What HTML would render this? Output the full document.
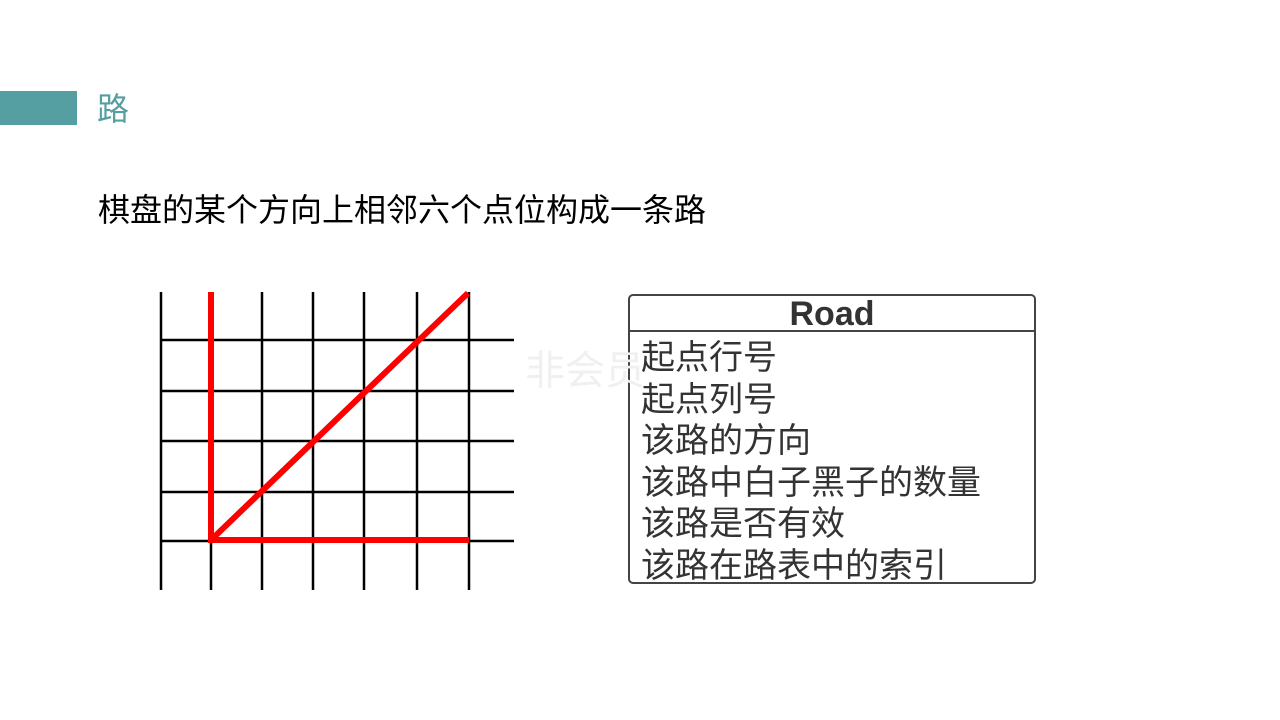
<!DOCTYPE html>
<html><head><meta charset="utf-8"><style>
body{margin:0;width:1280px;height:720px;background:#fff;position:relative;overflow:hidden;font-family:"Liberation Sans","Noto Sans CJK SC",sans-serif}
.a{position:absolute;white-space:nowrap}
</style></head><body>
<div class="a" style="left:0;top:91px;width:77px;height:34px;background:#559ea2"></div>
<div class="a" style="left:97px;top:89px;font-size:32px;line-height:40px;color:#559ea2">路</div>
<div class="a" style="left:98px;top:190px;font-size:32px;line-height:40px;color:#000">棋盘的某个方向上相邻六个点位构成一条路</div>
<svg class="a" style="left:0;top:0" width="1280" height="720">
<g stroke="#000" stroke-width="2.5">
<line x1="161" y1="292" x2="161" y2="590"/><line x1="211" y1="292" x2="211" y2="590"/><line x1="262" y1="292" x2="262" y2="590"/><line x1="313" y1="292" x2="313" y2="590"/><line x1="364" y1="292" x2="364" y2="590"/><line x1="417" y1="292" x2="417" y2="590"/><line x1="469" y1="292" x2="469" y2="590"/>
<line x1="161" y1="340" x2="514" y2="340"/><line x1="161" y1="391" x2="514" y2="391"/><line x1="161" y1="441" x2="514" y2="441"/><line x1="161" y1="492" x2="514" y2="492"/><line x1="161" y1="541" x2="514" y2="541"/>
</g>
<g stroke="#f00" stroke-width="6" fill="none">
<polyline points="211,292 211,540 469,540"/><line x1="211" y1="540" x2="468" y2="293"/>
</g>
<rect x="629" y="295" width="406" height="288" rx="4" fill="none" stroke="#444" stroke-width="2"/>
<line x1="629" y1="331" x2="1035" y2="331" stroke="#444" stroke-width="2"/>
</svg>
<div class="a" style="left:525px;top:338px;font-size:40px;color:#f0f0f0">非会员</div>
<div class="a" style="left:629px;top:295px;width:406px;text-align:center;font-size:34px;font-weight:bold;line-height:38px;color:#333">Road</div>
<div class="a" style="left:641px;top:338px;font-size:34px;line-height:41.6px;color:#333">起点行号<br>起点列号<br>该路的方向<br>该路中白子黑子的数量<br>该路是否有效<br>该路在路表中的索引</div>
</body></html>
